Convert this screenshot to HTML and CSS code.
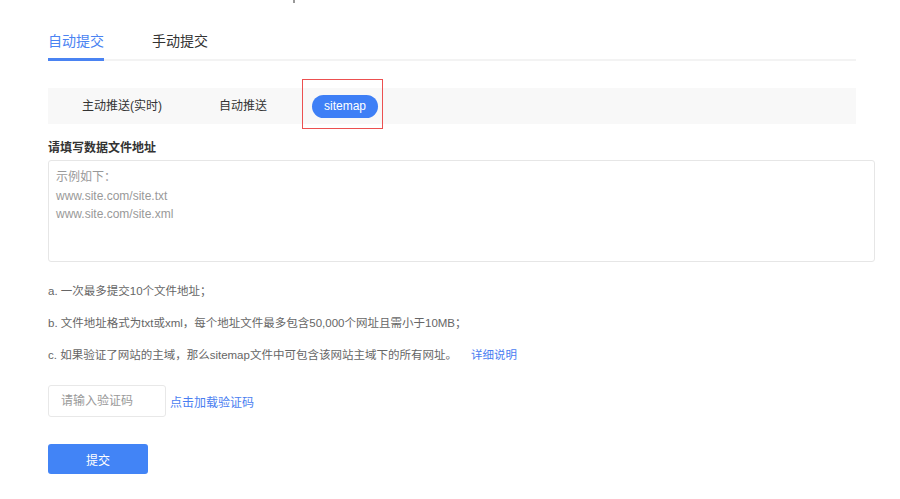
FILE: index.html
```html
<!doctype html>
<html lang="zh-CN">
<head>
    <meta charset="utf-8">
    <title>链接提交 - sitemap</title>
    <link rel="stylesheet" href="styles.css">
</head>
<body>
    <div class="top-mark"></div>
    <div class="page">
        <!-- 一级tab -->
        <ul class="tabs">
            <li class="tab active">自动提交</li>
            <li class="tab">手动提交</li>
        </ul>

        <!-- 二级tab -->
        <div class="sub-tabs">
            <span class="sub-tab">主动推送(实时)</span>
            <span class="sub-tab">自动推送</span>
            <span class="sub-tab on">sitemap<i class="mark-box"></i></span>
        </div>

        <div class="form">
            <p class="label">请填写数据文件地址</p>
            <textarea class="urls" placeholder="示例如下：&#10;www.site.com/site.txt&#10;www.site.com/site.xml"></textarea>

            <ul class="tips">
                <li>a. 一次最多提交10个文件地址；</li>
                <li>b. 文件地址格式为txt或xml，每个地址文件最多包含50,000个网址且需小于10MB；</li>
                <li>c. 如果验证了网站的主域，那么sitemap文件中可包含该网站主域下的所有网址。<a class="link more" href="#">详细说明</a></li>
            </ul>

            <div class="vcode">
                <input class="vcode-input" type="text" placeholder="请输入验证码">
                <a class="link" href="#">点击加载验证码</a>
            </div>

            <button class="btn-submit" type="button">提交</button>
        </div>
    </div>
</body>
</html>
```

FILE: styles.css
```css
*{
    margin:0;
    padding:0;
    box-sizing:border-box;
}
ul,li{
    list-style:none;
}
body{
    font-family:"Liberation Sans","Noto Sans CJK SC",sans-serif;
    font-size:12px;
    color:#333;
    background:#fff;
}
.top-mark{
    position:absolute;
    left:293px;
    top:0;
    width:2px;
    height:3px;
    background:#999;
}
.page{
    width:827px;
    margin-left:48px;
    padding-top:24px;
}

/* 一级tab */
.tabs{
    display:flex;
    width:808px;
    border-bottom:2px solid #f3f3f3;
}
.tab{
    font-size:14px;
    line-height:34px;
    margin-right:48px;
    margin-bottom:-2px;
    border-bottom:3px solid transparent;
    color:#333;
}
.tab.active{
    color:#4a83f2;
    border-bottom-color:#4a83f2;
}

/* 二级tab */
.sub-tabs{
    display:flex;
    align-items:center;
    gap:33px;
    width:808px;
    height:36px;
    margin-top:27px;
    padding-left:22px;
    background:#f8f8f8;
}
.sub-tab{
    position:relative;
    padding:0 12px;
    line-height:23px;
    border-radius:12px;
    color:#333;
}
.sub-tab.on{
    background:#3e7ff6;
    color:#fff;
}
/* 标注框 */
.mark-box{
    position:absolute;
    left:-10px;
    top:-16px;
    width:81px;
    height:50px;
    border:1px solid #ec5050;
}

.label{
    font-weight:bold;
    line-height:20px;
    margin-top:14px;
}
.urls{
    display:block;
    width:827px;
    height:102px;
    margin-top:2px;
    padding:7px 7px;
    border:1px solid #e6e6e6;
    border-radius:3px;
    font-family:inherit;
    font-size:12px;
    line-height:18.5px;
    resize:none;
    outline:none;
}
.urls::placeholder,
.vcode-input::placeholder{
    color:#999;
}

.tips{
    margin-top:19px;
    color:#666;
    font-size:11.5px;
}
.tips li{
    line-height:20px;
    margin-bottom:12px;
}
.link{
    color:#4a7ef1;
    text-decoration:none;
}
.more{
    margin-left:14px;
}

.vcode{
    display:flex;
    align-items:center;
    margin-top:20px;
}
.vcode-input{
    width:118px;
    height:32px;
    padding:0 12px;
    border:1px solid #e8e8e8;
    border-radius:3px;
    font-family:inherit;
    font-size:12px;
    outline:none;
    margin-right:4px;
}
.vcode .link{
    font-size:12px;
}

.btn-submit{
    display:block;
    width:100px;
    height:30px;
    margin-top:27px;
    border:0;
    border-radius:3px;
    background:#4284f6;
    color:#fff;
    font-family:inherit;
    font-size:12px;
    cursor:pointer;
}
```
